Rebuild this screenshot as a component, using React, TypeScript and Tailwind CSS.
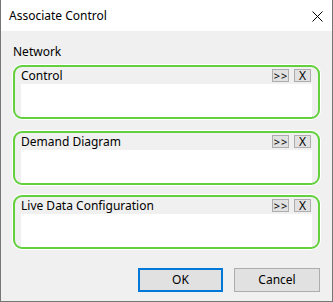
const groups = ["Control", "Demand Diagram", "Live Data Configuration"];

const GroupBox = ({ title, className }: { title: string; className?: string }) => {
  return (
    <div
      className={`h-[54px] rounded-[9px] border-2 border-[#63d13e] shadow-[0_0_0_1px_#ffffff] flex flex-col px-[6px] ${className ?? ""}`}
    >
      <div className="h-[17px] flex items-center justify-between">
        <span className="leading-[16px]">{title}</span>
        <div className="flex gap-[5px] pr-[1px]">
          <button className="w-[17px] h-[13px] bg-[#e1e1e1] border border-[#adadad] text-[11px] leading-[11px] tracking-[1px] pl-[1px] flex items-center justify-center">
            &gt;&gt;
          </button>
          <button className="w-[17px] h-[13px] bg-[#e1e1e1] border border-[#adadad] text-[12px] leading-[11px] flex items-center justify-center">
            X
          </button>
        </div>
      </div>
      <div className="h-[33px] bg-white" />
    </div>
  );
};

export default function App() {
  return (
    <div className="w-[333px] h-[302px] flex flex-col bg-[#f0f0f0] border border-t-0 border-[#767676] font-['Noto_Sans',sans-serif] text-[12px] text-black">
      <div className="h-[31px] bg-white flex items-center justify-between pl-[8px] pr-[9px]">
        <span className="leading-[16px]">Associate Control</span>
        <svg width="11" height="11" viewBox="0 0 11 11" className="mt-[1px]">
          <path d="M0.5 0.5 L10.5 10.5 M10.5 0.5 L0.5 10.5" stroke="#000" strokeWidth="1" />
        </svg>
      </div>
      <div className="flex-1 flex flex-col px-[12px] pt-[13px] pb-[9px]">
        <div className="leading-[16px]">Network</div>
        <GroupBox title={groups[0]} className="mt-[5px]" />
        <GroupBox title={groups[1]} className="mt-[12px]" />
        <GroupBox title={groups[2]} className="mt-[10px]" />
        <div className="mt-auto flex justify-end gap-[11px]">
          <button className="w-[85px] h-[24px] bg-[#e1e1e1] border-2 border-[#0078d7]">OK</button>
          <button className="w-[86px] h-[24px] bg-[#e1e1e1] border border-[#adadad]">Cancel</button>
        </div>
      </div>
    </div>
  );
}
